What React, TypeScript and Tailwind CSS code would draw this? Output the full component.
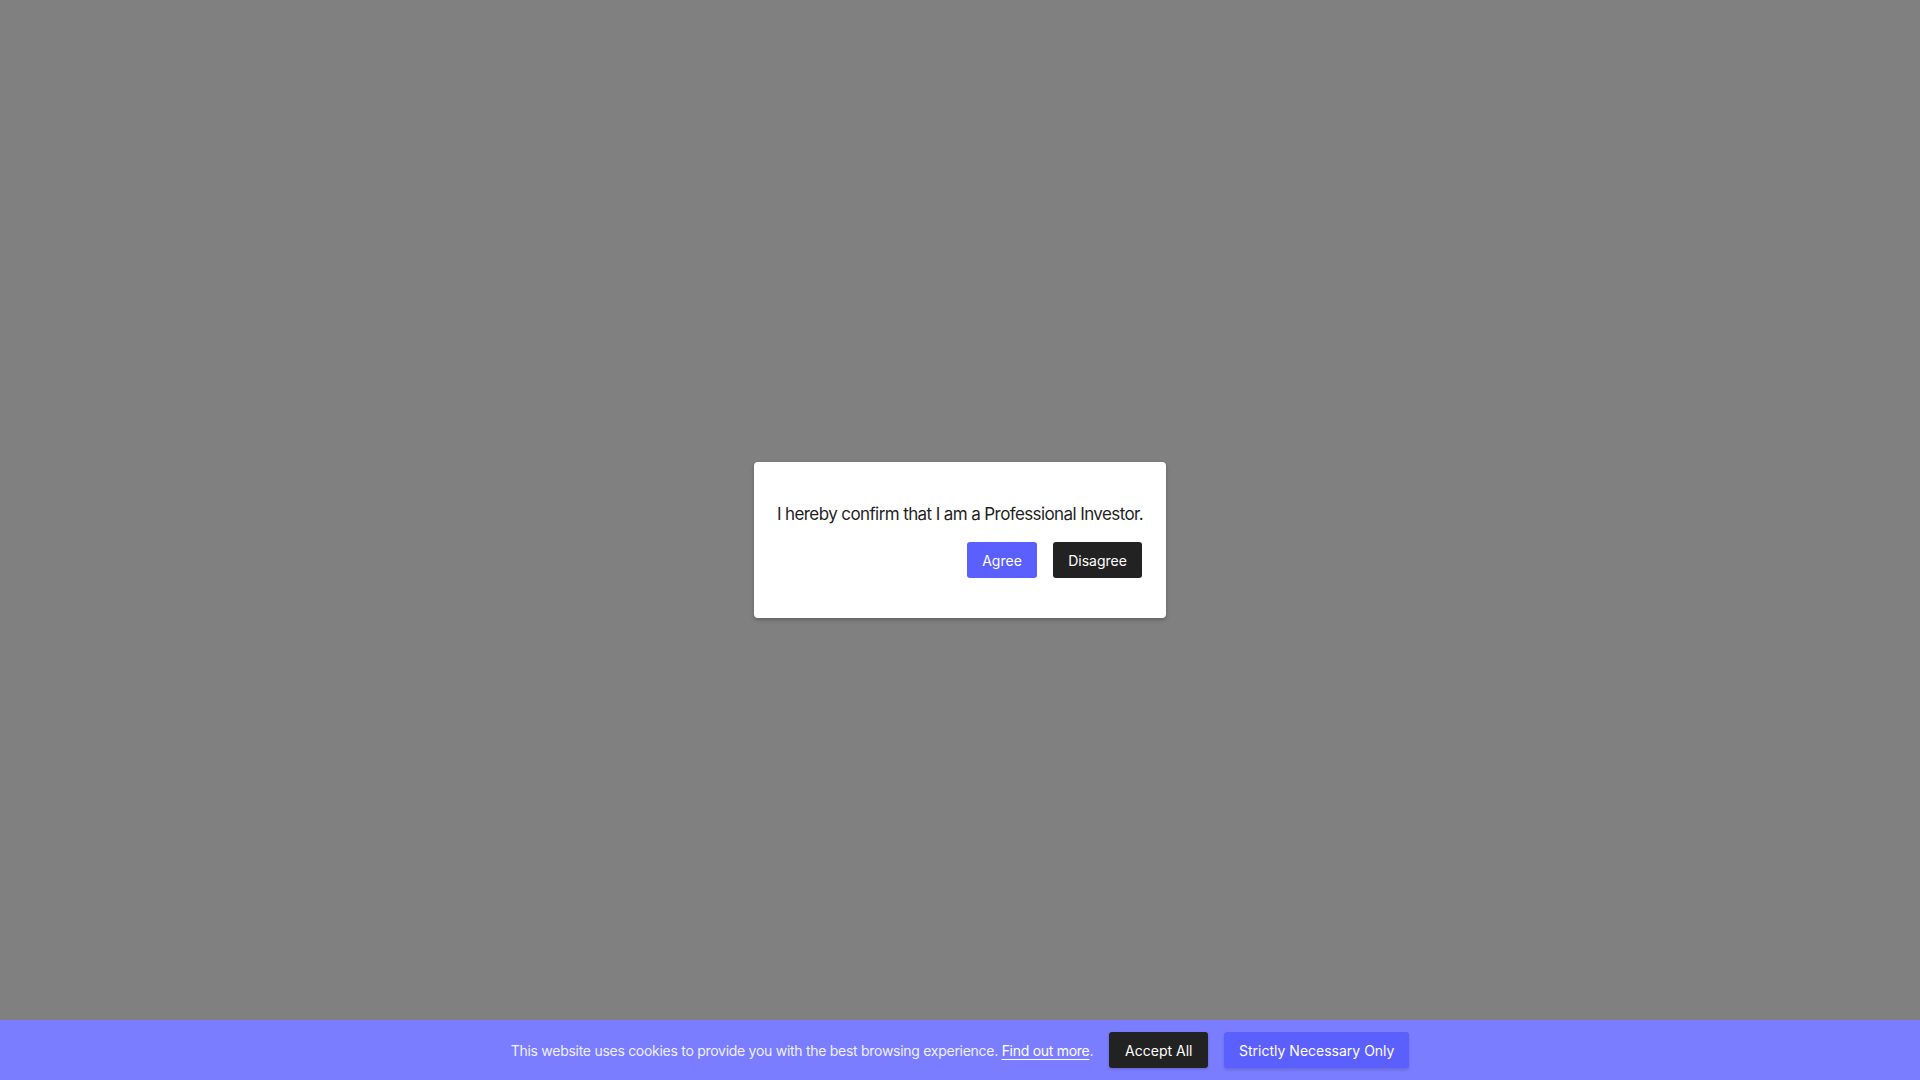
import React from "react";

export default function App() {
  return (
    <div
      className="w-[1920px] h-[1080px] bg-[#808080] flex flex-col text-[#222222]"
      style={{ fontFamily: "Inter, 'Noto Sans', sans-serif" }}
    >
      <div className="flex-1 flex items-center justify-center pt-[60px]">
        <div className="w-[412px] bg-white rounded-[4px] shadow-[0_2px_4px_rgba(0,0,0,0.25)] px-[20px] pt-[40px] pb-[40px] flex flex-col">
          <p className="text-[17px] leading-[24px] text-center whitespace-nowrap tracking-[-0.6px] text-[#1f1f24]">
            I hereby confirm that I am a Professional Investor.
          </p>
          <div className="flex justify-end gap-[16px] mt-[16px] pr-[4px]">
            <button className="h-[36px] w-[70px] rounded-[3px] bg-[#5b5ffd] text-white text-[14px]">
              Agree
            </button>
            <button className="h-[36px] w-[89px] rounded-[3px] bg-[#222222] text-white text-[14px]">
              Disagree
            </button>
          </div>
        </div>
      </div>
      <div className="h-[60px] bg-[#7a7dff] flex items-center justify-center text-[14px] text-[#f0f0ff]">
        <span className="tracking-[-0.28px]">
          This website uses cookies to provide you with the best browsing experience.{" "}
          <a className="underline underline-offset-[3px] text-white">Find out more</a>.
        </span>
        <button className="ml-[16px] h-[36px] w-[99px] rounded-[3px] bg-[#222222] text-white text-[14px] shadow-[0_1px_3px_rgba(0,0,0,0.2)]">
          Accept All
        </button>
        <button className="ml-[16px] h-[36px] w-[185px] rounded-[3px] bg-[#5b5ffd] text-white text-[14px] shadow-[0_2px_3px_rgba(0,0,0,0.15)]">
          Strictly Necessary Only
        </button>
      </div>
    </div>
  );
}
